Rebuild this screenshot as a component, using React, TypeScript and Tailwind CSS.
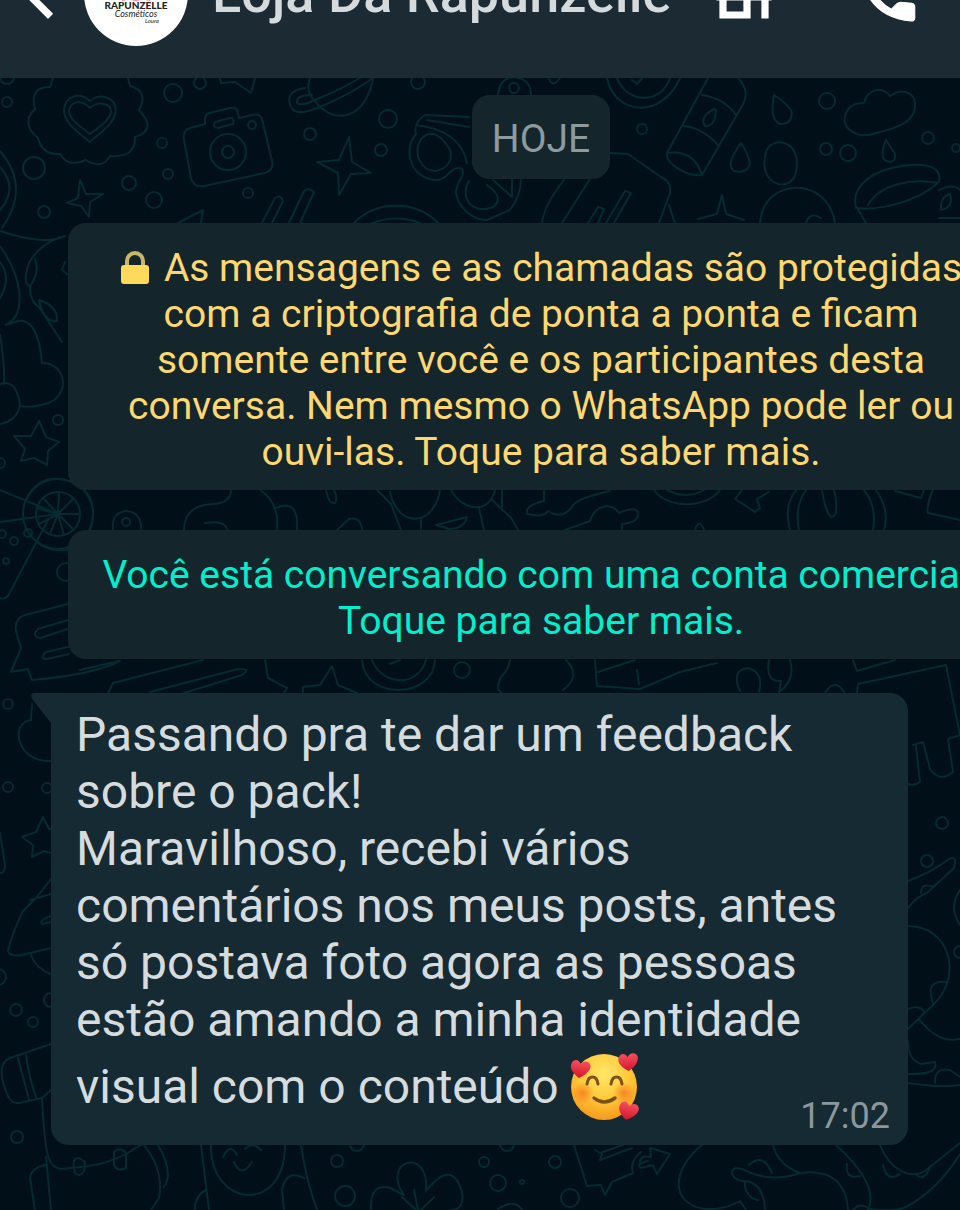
import type { ReactNode } from "react";

const DOTS: [number, number, number][] = [
  [7, 102, 5], [7, 77, 7], [173, 93, 9], [200, 83, 6], [162, 143, 5], [34, 168, 11],
  [44, 212, 6], [129, 183, 7], [168, 174, 5], [154, 200, 8], [248, 193, 5], [418, 82, 7],
  [388, 119, 9], [310, 134, 6], [381, 150, 6], [514, 88, 5], [642, 129, 5], [827, 101, 8],
  [826, 149, 6], [848, 153, 8], [928, 138, 6], [956, 148, 4], [58, 420, 5], [0, 463, 5],
  [2, 534, 4], [14, 541, 4], [28, 533, 4], [6, 561, 3], [66, 572, 9], [126, 522, 4],
  [8, 704, 5], [8, 787, 5], [47, 788, 5], [-2, 977, 8], [16, 1010, 6], [33, 1022, 5],
  [51, 1000, 7], [17, 1137, 6], [462, 670, 8], [942, 823, 6], [927, 861, 6], [960, 952, 6],
  [337, 1161, 6], [345, 1196, 10], [484, 1162, 5], [498, 1183, 8], [555, 1162, 6],
  [570, 1198, 9], [522, 1182, 2], [357, 1144, 7], [507, 1144, 7], [228, 152, 18], [228, 152, 6],
  [252, 125, 4], [58, 514, 22], [58, 514, 35],
];

const DOODLES: string[] = [
  // flower badge with a heart
  "M53 78L50 87Q29 87 35 109Q20 123 38 138Q42 155 60 154Q68 168 86 160Q102 170 110 156Q136 158 135 137Q158 130 139 110Q149 91 130 86L128 78",
  "M90 142C75 130 64 122 64 110C65 95 80 92 90 101C101 92 116 98 116 111C114 124 101 132 90 142Z",
  "M90 134C78 125 69 119 69 110C71 101 82 99 90 108C99 100 111 104 111 112C109 121 99 127 90 134Z",
  // camera
  "M205 124L190 128Q182 131 184 140L191 178Q194 188 204 186L265 173Q274 170 272 161L262 119Q260 113 252 115L239 118L237 110Q236 107 230 108L209 113Q205 115 205 119Z",
  "M215 122L230 118Q235 118 233 124L218 128Q212 128 215 122Z",
  // planet
  "M310 78Q305 92 315 101C333 126 366 120 373 78",
  "M305 88Q284 91 291 107Q296 117 320 107Q351 94 373 78M312 95Q296 95 297 103Q301 107 317 99Q342 89 360 78",
  "M220 78L221 83L235 82L251 93L255 78",
  // sparkles
  "M80 180L86 194L103 194L90 202L89 217L81 206L67 203L78 198Z",
  "M349 137L352 162L371 173L351 174L339 195L338 173L317 162L339 160Z",
  "M722 195L726 214L744 220M722 195L717 214L698 219",
  // sticks and arc
  "M262 223L275 198Q281 194 283 201L272 223M289 223L304 191Q309 187 314 192L300 223",
  "M354 223C376 200 416 200 438 223M372 223Q397 214 420 223M178 223L203 210L201 223",
  // glasses
  "M469 117L425 115Q413 123 416 134C401 152 413 181 438 180C448 180 451 164 462 169C466 176 456 181 456 193C458 207 472 220 487 220L510 210Q521 196 521 178",
  "M421 139C412 156 422 171 436 171C449 168 454 158 449 148Q434 125 421 139ZM416 125Q460 130 467 163M427 120L469 127M469 181Q462 193 469 203Q479 213 493 207Q505 198 487 185M512 179L512 197L493 180",
  "M498 95Q499 78 514 77Q531 79 531 95M549 78Q552 89 560 78",
  "M607 78C614 114 661 121 680 78M617 78C627 104 661 105 670 78M632 80L637 84L645 75",
  // tube
  "M708 78L667 153C665 164 688 177 702 175L742 106Q751 91 738 78M702 95Q724 98 736 115M682 126Q702 127 718 145M667 153Q694 149 702 175M714 109Q699 117 705 126Q715 127 716 110Z",
  "M774 95Q769 119 780 124Q794 124 791 110Q784 101 774 95ZM741 143Q725 165 734 171Q748 174 750 163Q748 154 741 143ZM886 140Q879 157 886 161Q896 164 895 154Z",
  "M766 152C757 182 786 194 795 176C805 139 771 135 766 152Z",
  "M857 134Q840 127 846 113Q850 103 864 103C868 87 885 87 890 96Q905 86 914 98C920 121 898 128 876 133Q866 137 857 134Z",
  "M542 223Q544 205 564 180M562 223L590 179M610 153L628 154L661 177Q672 182 670 193L659 223M588 223L598 207L604 209L598 223M606 223L625 191L631 193L614 223M669 205L675 223",
  "M760 223C763 177 828 175 835 223M806 223Q810 211 821 218",
  "M856 208C850 184 876 168 910 165Q943 163 939 182C920 200 882 211 856 208M868 205C880 184 912 178 938 183M857 208L866 223M939 190Q954 183 960 190M941 210Q940 196 950 194Q954 207 941 210M939 218L960 218",
  // left edge
  "M0 151Q31 187 2 228M0 167Q19 188 0 210M0 231Q45 246 65 236M0 246C24 280 26 315 6 325M0 262Q12 278 0 298M29 263Q38 246 60 237M29 263Q22 285 30 286Q40 273 35 259M30 286Q30 302 39 307L62 342M39 300Q58 306 57 321Q44 323 39 300M65 262L62 270L68 275",
  "M10 324Q37 309 42 363C67 362 73 400 41 405Q30 408 20 406C17 376 0 384 0 384M20 406Q16 421 0 424M0 335Q5 365 4 384",
  "M39 421L46 437L59 442L48 451L47 465L34 458L21 461L25 449L14 436L31 436Z",
  "M0 490L58 514L0 522M48 520L8 596Q4 600 0 598M26 500Q38 474 66 480Q94 488 93 515Q91 552 57 550Q44 549 38 542",
  "M58 514L80 514M58 514L73 499M58 514L59 492M58 514L43 498M58 514L37 508M58 514L39 524M58 514L50 534M58 514L64 535M58 514L74 530",
  "M68 604L25 615Q14 619 16 631L21 648L11 672L28 669L32 680Q92 675 120 661M68 620L38 629Q31 636 40 638L68 629M68 647L46 652Q39 659 47 659L69 654",
  // strip between the notices
  "M113 530Q111 512 127 511Q142 513 141 530M184 530Q184 505 213 504Q231 503 231 490M205 523Q226 520 227 530M260 490Q280 503 277 530M276 508Q299 498 297 530M326 490Q329 505 335 503Q338 497 334 490M337 530L349 519Q361 516 362 530M377 490L391 504M390 492C398 529 434 527 440 490M391 504L401 530M421 520L421 530M451 490C464 513 490 513 495 490M436 525L467 517Q464 529 449 529L436 525M479 508L484 530M492 500L510 517M502 490L502 507",
  "M544 491L544 501Q525 505 527 514Q544 518 548 511Q562 520 572 507Q574 499 610 491M565 530L590 521C596 503 613 503 619 513Q639 504 638 516Q636 523 622 524L622 530M654 490C667 509 706 509 720 490M667 490Q686 500 704 490M695 530Q699 517 704 530M742 490L735 499L755 512L760 508L757 499L769 492M796 490C785 505 787 517 790 530M806 490Q794 507 799 530M822 490Q825 511 831 517Q840 517 834 490M864 490Q877 506 873 530M876 490Q890 510 884 530M895 491L921 498L924 490M933 490Q926 506 928 513L960 520M510 516L518 530",
  // strip above the message
  "M80 670L119 661M108 693L113 683L203 660M150 692L238 669Q252 668 242 675L184 693M265 660L268 678L287 688L284 693M303 693L303 687L320 685L332 666L338 685L357 693M362 660C364 700 433 700 435 660M372 660C382 686 418 688 426 660M390 664L400 660M510 660Q508 671 501 677Q495 690 502 693M566 660Q582 676 563 690M595 660L597 686L640 689L680 672L717 663M598 672L635 660M637 670L639 684M740 691Q731 671 747 668Q764 671 759 692M769 660Q765 682 781 681L779 692Q796 680 790 660M825 693Q835 677 844 692M853 660L857 671L895 660M857 693L858 684L946 665L960 735M916 746L920 782Q915 786 908 784M913 745L923 742L930 769Q940 783 953 772L948 739L960 735",
  // left of the message
  "M32 704L31 720C9 723 17 763 51 761M43 817L49 829L51 829M43 817L36 832L22 837L33 845L32 857L44 851L51 853M0 833L5 865Q5 874 0 873M51 879L36 898L23 911Q11 936 8 951Q10 957 22 955L51 948M51 894L30 900M51 916Q38 921 42 924L51 922M31 955Q36 969 51 974",
  "M51 1044L10 1058Q-5 1064 7 1094Q11 1104 19 1103L42 1098L51 1090M18 1058Q25 1084 29 1100M26 1055Q30 1082 36 1097M42 1098C45 1157 47 1173 69 1168Q110 1166 134 1149L141 1145M35 1210L30 1178Q31 1168 45 1165M46 1157L51 1210M74 1168Q72 1158 79 1158L85 1162L84 1171Q80 1178 75 1173ZM114 1152Q120 1146 126 1153L126 1168Q117 1172 114 1165Z",
  // right of the message
  "M908 881Q934 871 949 859Q958 855 954 868L928 892Q915 898 908 908M921 893Q921 882 933 887M908 926C949 926 963 974 935 1003L908 1029M948 982Q924 979 933 1003M908 1009Q920 1004 925 1013M919 1019Q938 1044 960 1039M908 1041Q908 1060 921 1064L935 1062Q939 1075 908 1074M908 1083Q941 1088 960 1085M935 1083Q934 1067 950 1070L960 1077M960 890Q948 907 960 925",
  "M880 1145C890 1170 910 1180 925 1171L960 1143M883 1165Q887 1183 900 1174M916 1174Q924 1183 930 1167M960 1154Q937 1191 904 1208Q889 1212 870 1209",
  // below the message
  "M144 1145Q164 1170 159 1198L151 1210M158 1145Q174 1173 164 1187M201 1145L209 1210M211 1145C209 1207 285 1216 285 1145M223 1157Q230 1142 237 1155M245 1149Q253 1141 261 1150M234 1162Q241 1179 252 1162M301 1145Q306 1180 317 1210M284 1210L282 1190Q286 1169 304 1178M195 1210Q195 1195 206 1190",
  "M371 1210Q370 1182 390 1188L404 1195C380 1160 430 1146 426 1191Q452 1158 462 1192Q465 1210 451 1210M414 1190L418 1210M402 1197L416 1210M434 1197L421 1210M498 1209Q515 1198 522 1210",
  "M574 1145L587 1186L601 1185L605 1195L612 1182L633 1173Q629 1162 641 1152M595 1150L600 1153L623 1145M602 1154L600 1160L632 1148M640 1162Q640 1155 651 1157L650 1148L670 1154L657 1174L653 1165L641 1168Q635 1164 648 1161",
  "M702 1145C671 1170 670 1204 705 1209Q725 1210 740 1201L746 1210M773 1145Q778 1165 800 1173Q845 1167 848 1210M800 1173Q775 1182 751 1173C724 1158 729 1183 745 1181Q764 1183 765 1210M749 1165Q763 1152 772 1173M745 1181Q744 1197 758 1200M836 1145Q880 1185 868 1210M847 1164Q845 1180 860 1176M853 1210Q860 1202 868 1208",
];

function Wallpaper() {
  return (
    <svg
      aria-hidden="true"
      className="absolute inset-0 h-full w-full"
      fill="none"
      stroke="#052a30"
      strokeWidth="2"
      strokeLinecap="round"
      strokeLinejoin="round"
    >
      {DOODLES.map((d) => (
        <path key={d} d={d} />
      ))}
      {DOTS.map(([cx, cy, r]) => (
        <circle key={`${cx}-${cy}-${r}`} cx={cx} cy={cy} r={r} />
      ))}
    </svg>
  );
}

function HeaderButton({
  label,
  path,
  className,
}: {
  label: string;
  path: string;
  className: string;
}) {
  return (
    <button
      type="button"
      aria-label={label}
      className={`flex shrink-0 items-center justify-center text-white ${className}`}
    >
      <svg
        viewBox="0 0 24 24"
        className="size-18"
        fill="currentColor"
        stroke="currentColor"
        strokeWidth="0.4"
        strokeLinejoin="round"
      >
        <path d={path} />
      </svg>
    </button>
  );
}

function Avatar() {
  return (
    <div className="flex size-26 shrink-0 flex-col items-center justify-end overflow-hidden rounded-full bg-white pb-[22px] font-[Lato] text-[#222]">
      <svg viewBox="0 0 32 24" className="w-8" fill="#f0809a" aria-hidden="true">
        <path d="M2 24Q-2 4 16 1Q34 4 30 24Q24 22 16 24Q8 22 2 24Z" />
      </svg>
      <span className="text-[10px] leading-[9px] font-black">RAPUNZELLE</span>
      <span className="text-[9px] leading-[8px] italic">Cosméticos</span>
      <span className="ml-8 text-[6px] leading-[6px] italic">Loura</span>
    </div>
  );
}

function Header() {
  return (
    <header className="relative overflow-hidden bg-[#1b2a33] pb-8">
      <div className="-mt-[58px] flex items-center">
        <HeaderButton
          label="Voltar"
          className="ml-3"
          path="M20 11H7.83l5.59-5.59L12 4l-8 8 8 8 1.41-1.41L7.83 13H20v-2z"
        />
        <Avatar />
        <h1 className="ml-6 min-w-0 flex-1 text-[54px] leading-[60px] font-medium whitespace-nowrap text-[#d5dadd]">
          Loja Da Rapunzelle
        </h1>
        <HeaderButton
          label="Loja"
          className="w-36"
          path="M20 4H4v2h16V4zm1 10v-2l-1-5H4l-1 5v2h1v6h10v-6h4v6h2v-6h1zm-9 4H6v-4h6v4z"
        />
        <HeaderButton
          label="Ligar"
          className="w-36"
          path="M20.9 16.3V19.9Q20.9 21 19.7 21C13.5 20.4 9 18 6.2 13.9Q3.2 9.5 3 4.2Q3 3.1 4 3.1H7.7Q8.7 3.1 8.8 4.2L9.2 7.6Q9.3 8.4 8.6 9L6.9 10.6Q9.2 15 13.1 17.1L14.9 15.3Q15.6 14.7 16.5 14.8L19.9 15.1Q20.9 15.3 20.9 16.3Z"
        />
      </div>
    </header>
  );
}

function Notice({ className, children }: { className: string; children: ReactNode }) {
  return (
    <button
      type="button"
      className={`w-full rounded-[18px] bg-[#14262c] pt-[22px] pb-[15px] text-center text-[39px] leading-[46px] whitespace-pre ${className}`}
    >
      {children}
    </button>
  );
}

function LockIcon() {
  return (
    <svg viewBox="0 0 30 34" className="mr-3.5 inline-block h-[34px] align-[-4px]" aria-hidden="true">
      <path d="M7 15V10a8 8 0 0 1 16 0v5" fill="none" stroke="#c9b766" strokeWidth="4" />
      <rect x="1" y="14" width="28" height="19" rx="3" fill="#ffd95a" />
    </svg>
  );
}

const HEART = "M0 9C-7 5-11 0-9-5C-7-10-2-9 0-5C2-9 8-10 10-5C11 0 6 6 0 9Z";

function LoveFace() {
  return (
    <svg
      viewBox="0 0 70 70"
      role="img"
      aria-label="Rosto sorridente com corações"
      className="mt-1 ml-2.5 inline-block size-[70px] align-[-19px]"
    >
      <defs>
        <radialGradient id="face" cx="0.5" cy="0.3" r="0.7">
          <stop offset="0" stopColor="#ffe767" />
          <stop offset="0.55" stopColor="#ffc93a" />
          <stop offset="1" stopColor="#f79a1c" />
        </radialGradient>
        <radialGradient id="blush">
          <stop offset="0" stopColor="#f5701f" stopOpacity="0.75" />
          <stop offset="1" stopColor="#f5701f" stopOpacity="0" />
        </radialGradient>
        <linearGradient id="heart" x1="0" y1="0" x2="0" y2="1">
          <stop offset="0" stopColor="#f5505c" />
          <stop offset="1" stopColor="#d3152c" />
        </linearGradient>
      </defs>
      <circle cx="35" cy="35" r="33" fill="url(#face)" />
      <circle cx="14" cy="41" r="11" fill="url(#blush)" />
      <circle cx="55" cy="41" r="11" fill="url(#blush)" />
      <g fill="none" stroke="#7a5218" strokeWidth="3" strokeLinecap="round">
        <path d="M18 32Q19 25 23.500 25Q28 25 29 32" />
        <path d="M42 32Q43 25 47.500 25Q52 25 53 32" />
        <path d="M25 46Q35 54 46 46" strokeWidth="3.5" />
      </g>
      <g fill="url(#heart)">
        <path d={HEART} transform="translate(11 17) rotate(8)" />
        <path d={HEART} transform="translate(59 10) rotate(-4)" />
        <path d={HEART} transform="translate(59 59) rotate(14)" />
      </g>
    </svg>
  );
}

function Message() {
  return (
    <article className="relative mt-[34px] ml-[51px] max-w-[857px] rounded-[18px] rounded-tl-none bg-[#152a33] pt-[13px] pr-[18px] pb-2.5 pl-[25px]">
      <svg viewBox="0 0 24 34" className="absolute top-0 -left-5 h-[34px] w-6" fill="#152a33" aria-hidden="true">
        <path d="M3 0H24V34L20 30L1 6Q-1 0 3 0Z" />
      </svg>
      <p className="text-[48px] leading-[57px] whitespace-pre text-[#d6dcde]">
        {"Passando pra te dar um feedback\nsobre o pack!\nMaravilhoso, recebi vários\ncomentários nos meus posts, antes\nsó postava foto agora as pessoas\nestão amando a minha identidade\nvisual com o conteúdo"}
        <LoveFace />
      </p>
      <time className="-mt-[25px] block text-right text-[36px] leading-[38px] text-[#8c979d]">17:02</time>
    </article>
  );
}

export default function App() {
  return (
    <div className="relative flex min-h-screen flex-col overflow-hidden bg-[#000f18] font-[Roboto,sans-serif]">
      <Wallpaper />
      <Header />
      {/* the conversation runs past the right edge of the window */}
      <main className="relative -mr-[122px] pt-[17px] pb-14">
        <div className="flex flex-col items-center px-[68px]">
          <div className="rounded-[18px] bg-[#14262c] px-5 pt-[21px] pb-[17px] text-[39px] leading-[46px] text-[#8d9b9f]">
            HOJE
          </div>
          <Notice className="mt-11 text-[#fdd872]">
            <LockIcon />
            {"As mensagens e as chamadas são protegidas\ncom a criptografia de ponta a ponta e ficam\nsomente entre você e os participantes desta\nconversa. Nem mesmo o WhatsApp pode ler ou\nouvi-las. Toque para saber mais."}
          </Notice>
          <Notice className="mt-10 text-[#00efcd]">
            {"Você está conversando com uma conta comercial.\nToque para saber mais."}
          </Notice>
        </div>
        <Message />
      </main>
    </div>
  );
}
